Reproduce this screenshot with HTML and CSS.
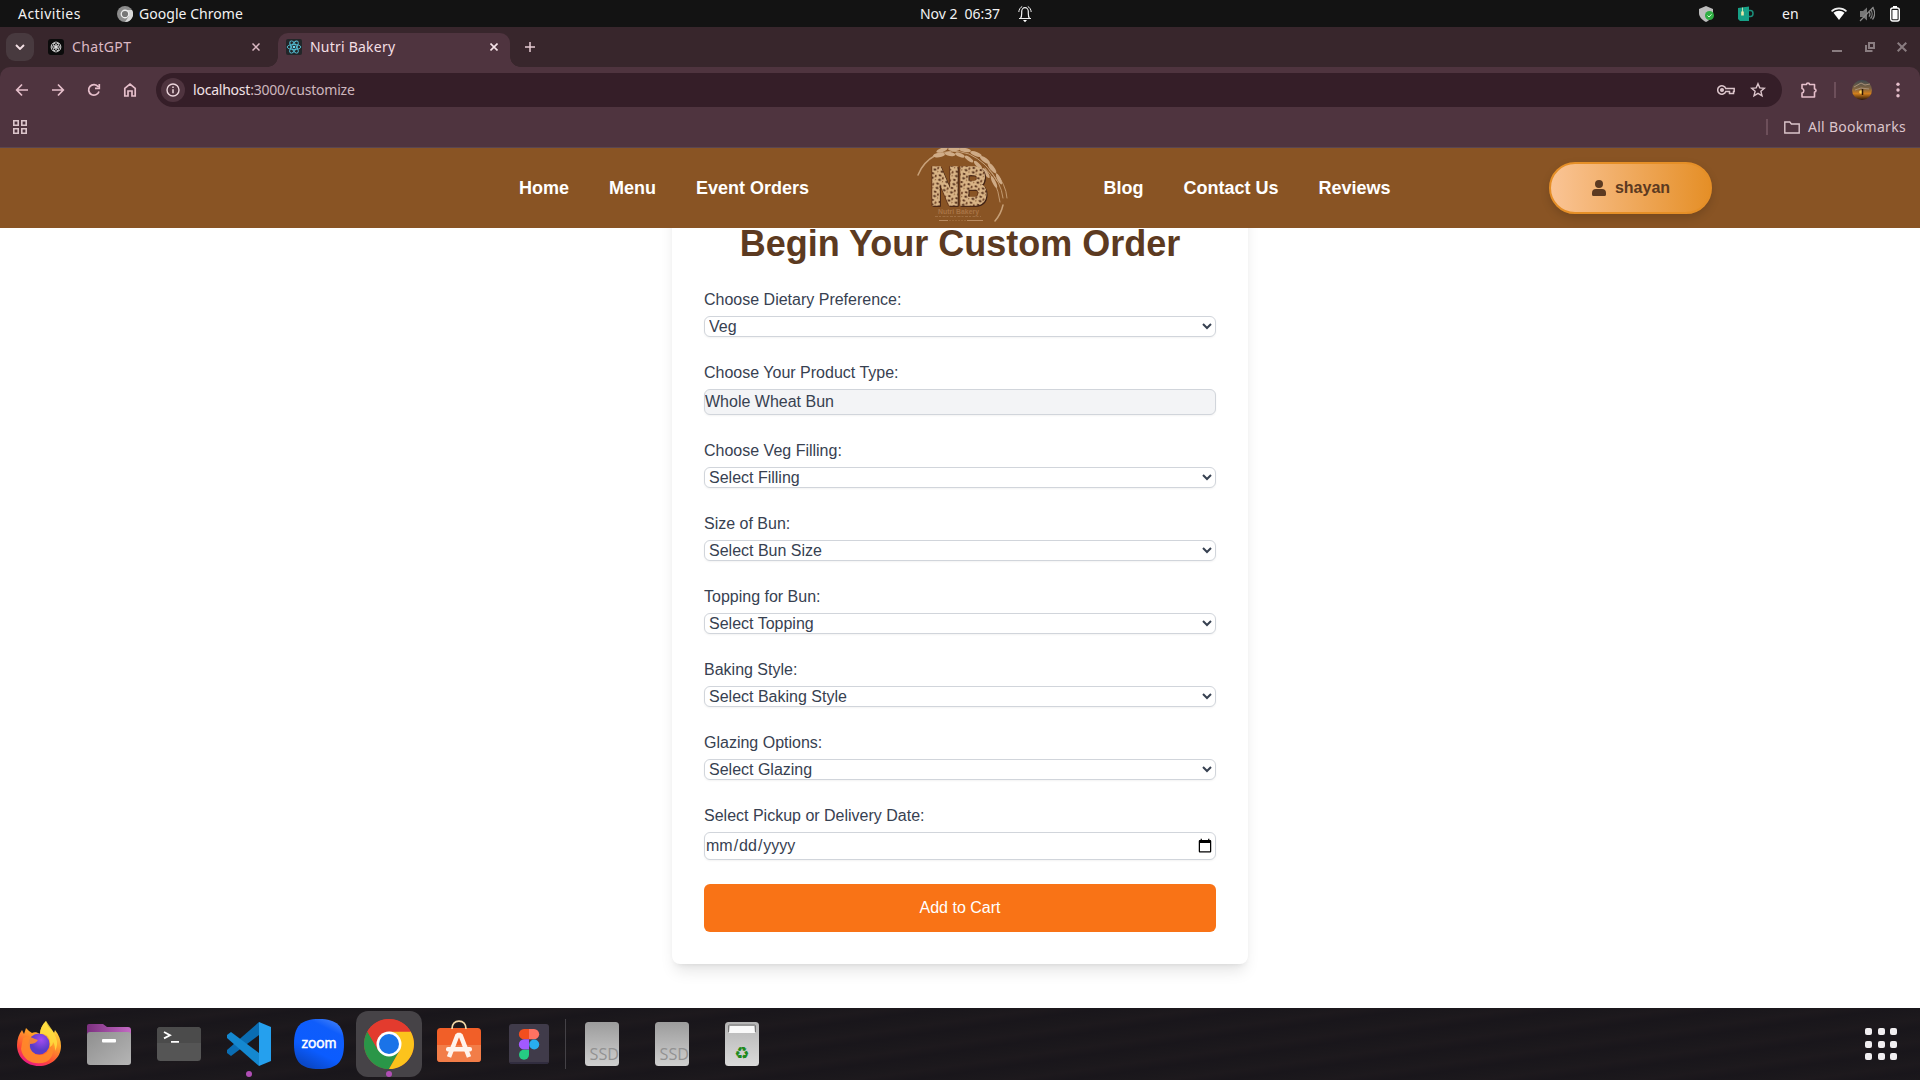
FILE: index.html
```html
<!DOCTYPE html>
<html lang="en">
<head>
<meta charset="utf-8">
<title>Nutri Bakery</title>
<link rel="stylesheet" href="styles.css">
</head>
<body>
<div class="screen">

  <div class="topbar">
    <div class="topbar-left">
      <span class="t-activities">Activities</span>
      <svg class="t-chrome" width="16" height="16" viewBox="0 0 16 16"><circle cx="8" cy="8" r="8" fill="#8c8c8c"/><path d="M8 4h7a8 8 0 0 1-7 12l4-6z" fill="#d8d8d8"/><circle cx="8" cy="8" r="4.400" fill="#eee"/><circle cx="8" cy="8" r="3.100" fill="#777"/></svg>
      <span class="t-app">Google Chrome</span>
    </div>
    <div class="topbar-mid">
      <span class="t-date">Nov 2&nbsp; 06:37</span>
      <svg width="14" height="18" viewBox="0 0 14 18" fill="none" stroke="#f2f2f2"><path d="M1 13.500h12M2.500 13.500C3.500 12 3.700 10.500 3.700 8.500V6.500a3.300 3.800 0 0 1 6.600 0v2c0 2 .2 3.500 1.200 5" stroke-width="1.200"/><path d="M4.200 1.500C2.200 2.500 1 4.500.8 7M9.800 1.500c2 1 3.200 3 3.400 5.500" stroke-width="1"/><path d="M5 15h4l-2 2.200z" fill="#fff" stroke="none"/></svg>
    </div>
    <div class="topbar-right">
      <span class="tray tray-shield"><svg width="16" height="16" viewBox="0 0 16 16"><path d="M7 0l7 3v4c0 4-3 7-7 9-4-2-7-5-7-9V3z" fill="#bdbdbd"/><circle cx="10.500" cy="9.500" r="4.500" fill="#2fae43"/><path d="M8.500 9.500l1.500 1.500 2.500-2.700" stroke="#d8ffd8" fill="none"/></svg></span>
      <span class="tray tray-cup"><svg width="16" height="16" viewBox="0 0 16 16"><path d="M0 2l11-1.500V15H2L0 13z" fill="#17a086"/><path d="M11 4.500h1.500a2.500 3 0 0 1 0 6H11" stroke="#1b8f7b" stroke-width="1.500" fill="none"/><path d="M4.500 1.500V6" stroke="#eee9b5" stroke-width=".8"/><path d="M3.200 5.500h2.600v4H3.200z" fill="#e8e6a8"/></svg></span>
      <span class="t-lang">en</span>
      <span class="tray tray-wifi"><svg width="16" height="14" viewBox="0 0 16 14"><path d="M.5 4.300a11 11 0 0 1 15 0" stroke="#eee" stroke-width="1.600" fill="none"/><path d="M2.500 5.800a8.500 8.500 0 0 1 11 0L8 13z" fill="#fff"/></svg></span>
      <span class="tray tray-mute"><svg width="16" height="16" viewBox="0 0 16 16"><path d="M1 5h3l4-3.500v13L4 11H1z" fill="#777"/><path d="M10 5.500a4 4 0 0 1 0 5M11.500 3.500a7 7 0 0 1 0 9M13.500 1.500a9.500 9.500 0 0 1 0 12M1 15L14.500 1" stroke="#8a8a8a" fill="none" stroke-width="1.200"/></svg></span>
      <span class="tray tray-batt"><svg width="10" height="16" viewBox="0 0 10 16"><rect x=".7" y="2" width="8.600" height="13" rx="2" fill="none" stroke="#fff" stroke-width="1.400"/><path d="M3 0h4v2H3z" fill="#fff"/><path d="M2.400 4h5.200v9.300H2.400z" fill="#fff"/></svg></span>
    </div>
  </div>

  <div class="tabstrip">
    <span class="tab-search"><svg width="10" height="6" viewBox="0 0 10 6"><path d="M1 1l4 4 4-4" fill="none" stroke="#f3dfe4" stroke-width="1.900"/></svg></span>
    <div class="tab">
      <svg width="16" height="16" viewBox="0 0 16 16"><rect width="16" height="16" rx="3" fill="#0b0b0b"/><g fill="none" stroke="#e6e6e6" stroke-width=".8"><ellipse cx="8" cy="5.300" rx="2.600" ry="2.300"/><ellipse cx="8" cy="5.300" rx="2.600" ry="2.300" transform="rotate(60 8 8)"/><ellipse cx="8" cy="5.300" rx="2.600" ry="2.300" transform="rotate(120 8 8)"/><ellipse cx="8" cy="5.300" rx="2.600" ry="2.300" transform="rotate(180 8 8)"/><ellipse cx="8" cy="5.300" rx="2.600" ry="2.300" transform="rotate(240 8 8)"/><ellipse cx="8" cy="5.300" rx="2.600" ry="2.300" transform="rotate(300 8 8)"/></g></svg>
      <span class="tab-title title-chat">ChatGPT</span>
      <svg class="x" width="8" height="8" viewBox="0 0 8 8"><path d="M.5.500l7 7m0-7l-7 7" stroke="#dcb9c4" stroke-width="1.500"/></svg>
    </div>
    <div class="tab tab-active">
      <svg width="16" height="16" viewBox="0 0 16 16"><rect width="16" height="16" rx="2" fill="#222629"/><g fill="none" stroke="#55bfd6" stroke-width=".9"><ellipse cx="8" cy="8" rx="6.800" ry="2.600"/><ellipse cx="8" cy="8" rx="6.800" ry="2.600" transform="rotate(60 8 8)"/><ellipse cx="8" cy="8" rx="6.800" ry="2.600" transform="rotate(120 8 8)"/></g><circle cx="8" cy="8" r="1.300" fill="#6ad8ef"/></svg>
      <span class="tab-title title-nutri">Nutri Bakery</span>
      <svg class="x" width="8" height="8" viewBox="0 0 8 8"><path d="M.5.500l7 7m0-7l-7 7" stroke="#f5e3e8" stroke-width="1.600"/></svg>
    </div>
    <svg class="tab-plus" width="10" height="10" viewBox="0 0 10 10"><path d="M5 0v10M0 5h10" stroke="#e6ccd3" stroke-width="1.500"/></svg>
    <div class="winctl">
      <svg width="10" height="10" viewBox="0 0 10 10"><path d="M0 9h10" stroke="#8a7d81" stroke-width="2"/></svg>
      <svg width="10" height="10" viewBox="0 0 10 10"><path d="M4 1h5v5H4zM1 3v6h6.500" stroke="#8a7d81" stroke-width="2" fill="none"/></svg>
      <svg width="10" height="10" viewBox="0 0 10 10"><path d="M.7.700l8.600 8.600m0-8.600L.7 9.300" stroke="#8a7d81" stroke-width="2"/></svg>
    </div>
  </div>

  <div class="chrome-bars">
    <div class="toolbar">
      <div class="navbtns">
        <svg width="14" height="14" viewBox="0 0 14 14"><path d="M13 7H2M7 1.500L1.700 7 7 12.500"/></svg>
        <svg width="14" height="14" viewBox="0 0 14 14"><path d="M1 7h11M7 1.500L12.300 7 7 12.500"/></svg>
        <svg width="14" height="14" viewBox="0 0 14 14"><path d="M12 8.500A5.300 5.300 0 1 1 11.200 3.700M12.300 1v4.300H8"/></svg>
        <svg width="14" height="14" viewBox="0 0 14 14"><path d="M1.800 13V5.300L7 1.200l5.200 4.100V13H9V8H5v5z"/></svg>
      </div>
      <div class="omnibox">
        <span class="info"><svg width="14" height="14" viewBox="0 0 14 14"><circle cx="7" cy="7" r="6" fill="none" stroke="#ecd6dc" stroke-width="1.400"/><path d="M7 6.200v4M7 3.500V5" stroke="#ecd6dc" stroke-width="1.500"/></svg></span>
        <span class="url"><b>localhost</b>:3000/customize</span>
        <svg class="key" width="18" height="12" viewBox="0 0 18 12" fill="none" stroke="#dcc5cb" stroke-width="1.500"><path d="M8.800 4.500a4.200 4.200 0 1 0 0 3h3.700v2h4v-2h.7v-3z"/><circle cx="5" cy="6" r="1.300" fill="#dcc5cb"/></svg>
        <svg width="16" height="16" viewBox="0 0 16 16" fill="none" stroke="#dcc5cb" stroke-width="1.400"><path d="M8 1.700l1.800 4.200 4.600.4-3.500 3 1.100 4.500L8 11.400l-4 2.400 1.100-4.500-3.500-3 4.600-.4z"/></svg>
      </div>
      <div class="toolend">
        <svg class="puzzle" width="18" height="18" viewBox="0 0 18 18" fill="none" stroke="#e6bfcb" stroke-width="1.600"><path d="M2 3.500h4.500a1.500 1.500 0 0 1 3 0H14.500V8a1.500 1.500 0 0 1 0 3v5H2v-4a2.300 2.300 0 0 0 0-4.500z" stroke-linejoin="round"/></svg>
        <span class="vsep"></span>
        <svg class="avatar" width="20" height="20" viewBox="0 0 20 20"><defs><linearGradient id="sky" x1="0" y1="0" x2="0" y2="1"><stop offset="0" stop-color="#3d4850"/><stop offset=".45" stop-color="#86663f"/><stop offset=".68" stop-color="#d27f1c"/><stop offset="1" stop-color="#2a1608"/></linearGradient></defs><circle cx="10" cy="10" r="10" fill="url(#sky)"/><path d="M2 7l7-4 4 2 5-1M3 10l6-2 8 1" stroke="#a89078" fill="none"/><circle cx="9" cy="12" r="1.800" fill="#ffd45a"/><path d="M10.500 9v6" stroke="#2a1505" stroke-width="1.500"/></svg>
        <svg class="menu" width="4" height="16" viewBox="0 0 4 16" fill="#e6bfcb"><circle cx="2" cy="2.300" r="1.700"/><circle cx="2" cy="8" r="1.700"/><circle cx="2" cy="13.700" r="1.700"/></svg>
      </div>
    </div>
    <div class="bookmarks">
      <svg width="14" height="14" viewBox="0 0 14 14" fill="none" stroke="#dcc5cb" stroke-width="1.600"><path d="M.8.800h4.400v4.400H.8zM8.800.800h4.400v4.400H8.800zM.8 8.800h4.400v4.400H.8zM8.800 8.800h4.400v4.400H8.800z"/></svg>
      <div class="allbm">
        <span class="vsep"></span>
        <svg width="16" height="13" viewBox="0 0 16 13" fill="none" stroke="#dcc5cb" stroke-width="1.400"><path d="M.8 1h5l1.600 2h7.800v9H.8z"/></svg>
        <span class="bm-text">All Bookmarks</span>
      </div>
    </div>
  </div>

  <div class="page">
    <header class="site-header">
      <nav class="nav nav-left"><a>Home</a><a>Menu</a><a>Event Orders</a></nav>
      <svg class="logo" width="96" height="80" viewBox="0 0 96 80">
        <defs>
          <pattern id="crumb" width="7.500" height="8.500" patternUnits="userSpaceOnUse" patternTransform="rotate(17)"><rect width="7.500" height="8.500" fill="#d9b486"/><ellipse cx="2" cy="2" rx="1.500" ry="1.100" fill="#5a331d"/><ellipse cx="5.500" cy="3.800" rx="1" ry="1.500" fill="#6f4327"/><ellipse cx="2.800" cy="6.300" rx="1.500" ry="1" fill="#54301b"/><circle cx="6.200" cy="7.400" r=".7" fill="#8a5b36"/></pattern>
        </defs>
        <g fill="none" stroke="#c7a078" stroke-width="1.500" stroke-linecap="round"><path d="M3 27Q8 14 21 7"/><path d="M21 7Q36 0 54 6Q72 14 82 33" stroke-width="1"/><path d="M88 57Q86 66 80 73"/><path d="M80 24Q91 36 92 50M74 22Q86 34 88 50M70 20Q82 32 85 54" stroke-width=".9"/></g>
        <g fill="#cfab86">
          <ellipse cx="24" cy="7" rx="6" ry="2.300" transform="rotate(-8 24 7)"/><ellipse cx="27" cy="2" rx="6" ry="2" transform="rotate(-20 27 2)"/>
          <ellipse cx="35" cy="6" rx="5.500" ry="2" transform="rotate(8 35 6)"/><ellipse cx="39" cy="1" rx="6" ry="2"/>
          <ellipse cx="45" cy="7" rx="5" ry="1.900" transform="rotate(22 45 7)"/><ellipse cx="50" cy="2" rx="6" ry="2" transform="rotate(10 50 2)"/>
          <ellipse cx="54" cy="11" rx="5" ry="1.900" transform="rotate(36 54 11)"/><ellipse cx="61" cy="6" rx="6" ry="2.200" transform="rotate(20 61 6)"/>
          <ellipse cx="63" cy="17" rx="5.500" ry="1.900" transform="rotate(46 63 17)"/><ellipse cx="70" cy="12" rx="6" ry="2.300" transform="rotate(36 70 12)"/>
          <ellipse cx="71" cy="25" rx="6" ry="1.900" transform="rotate(56 71 25)"/><ellipse cx="77" cy="20" rx="6.500" ry="2.200" transform="rotate(52 77 20)"/>
          <ellipse cx="79" cy="34" rx="6.500" ry="1.700" transform="rotate(64 79 34)"/><ellipse cx="84" cy="31" rx="6" ry="1.800" transform="rotate(64 84 31)"/>
        </g>
        <text class="logo-nb" x="16" y="56" textLength="56" lengthAdjust="spacingAndGlyphs" fill="url(#crumb)" stroke="url(#crumb)" stroke-width="3.500">NB</text>
        <text class="logo-name" x="23" y="65.500" textLength="41" lengthAdjust="spacingAndGlyphs">Nutri Bakery</text>
        <path d="M20 68.500h46" stroke="#9f6e42" stroke-width="1" stroke-dasharray="3 1 2 1.500"/>
        <path d="M24 72.500h9M52 72.500h16" stroke="#b88a60" stroke-width="1"/><path d="M34 72.500h17" stroke="#9b6838" stroke-dasharray="2 1"/>
      </svg>
      <nav class="nav nav-right"><a>Blog</a><a>Contact Us</a><a>Reviews</a></nav>
      <button class="user"><svg width="14" height="16" viewBox="0 0 14 16" fill="#5c3a21"><circle cx="7" cy="4" r="4"/><path d="M0 13a4 4 0 0 1 4-4h6a4 4 0 0 1 4 4v1.500a1.500 1.500 0 0 1-1.500 1.500h-11A1.500 1.500 0 0 1 0 14.500z"/></svg>shayan</button>
    </header>

    <main class="card">
      <h1>Begin Your Custom Order</h1>
      <div class="field"><label>Choose Dietary Preference:</label><select><option>Veg</option></select></div>
      <div class="field"><label>Choose Your Product Type:</label><input class="readonly" type="text" value="Whole Wheat Bun" readonly></div>
      <div class="field"><label>Choose Veg Filling:</label><select><option>Select Filling</option></select></div>
      <div class="field"><label>Size of Bun:</label><select><option>Select Bun Size</option></select></div>
      <div class="field"><label>Topping for Bun:</label><select><option>Select Topping</option></select></div>
      <div class="field"><label>Baking Style:</label><select><option>Select Baking Style</option></select></div>
      <div class="field"><label>Glazing Options:</label><select><option>Select Glazing</option></select></div>
      <div class="field"><label>Select Pickup or Delivery Date:</label><input class="date" type="date"></div>
      <button class="add">Add to Cart</button>
    </main>
  </div>

  <div class="dock">
    <span class="slot"><svg width="44" height="46" viewBox="0 0 44 46"><defs><linearGradient id="fx" x1=".8" y1="0" x2=".3" y2="1"><stop offset="0" stop-color="#fff04a"/><stop offset=".4" stop-color="#ffa02a"/><stop offset=".75" stop-color="#ff4a35"/><stop offset="1" stop-color="#e8158a"/></linearGradient><radialGradient id="fg" cx=".6" cy=".3"><stop offset="0" stop-color="#a44cf0"/><stop offset="1" stop-color="#5a3cc8"/></radialGradient></defs><path d="M22 45C9 45 0 36 0 24 0 18 2 13 5 9l2 4 2-6c2 2 4 4 6 5 2-1 5-1 8 1 0-5 2-9 6-13 1 6 6 8 8 12l1-3c4 5 6 10 6 16 0 12-10 20-22 20z" fill="url(#fx)"/><circle cx="22" cy="23" r="10.500" fill="url(#fg)"/><path d="M6 17c5-3 9 0 15 2-2 3-5 4-8 4-1 6 4 11 10 11 7 0 11-5 10-13 5 6 4 16-4 20-11 4-23-1-25-13z" fill="#ff8a2a" opacity=".9"/><path d="M23 13c7-1 11 4 10 13 2-1 3-3 3-5 2 3 2 6 2 9 5-9 1-16-9-30-4 4-6 8-6 13z" fill="#ffe040" opacity=".8"/></svg></span>
    <span class="slot"><svg width="44" height="41" viewBox="0 0 44 41"><defs><linearGradient id="pu"><stop offset="0" stop-color="#7c3080"/><stop offset="1" stop-color="#c46ac4"/></linearGradient><linearGradient id="gr" x2="1" y2="1" x1="0" y1="0"><stop offset="0" stop-color="#8f8f8f"/><stop offset="1" stop-color="#b5b5b5"/></linearGradient></defs><path d="M0 2a2 2 0 0 1 2-2h14l4 3h21a3 3 0 0 1 3 3v8H0z" fill="url(#pu)"/><rect y="8" width="44" height="33" rx="3" fill="url(#gr)"/><rect x="15" y="15" width="14" height="3.500" rx="1" fill="#fff"/></svg></span>
    <span class="slot"><svg width="44" height="34" viewBox="0 0 44 34"><rect width="44" height="34" rx="3.500" fill="#555"/><path d="M0 16V3.500A3.500 3.500 0 0 1 3.500 0h37A3.500 3.500 0 0 1 44 3.500V16z" fill="#4b4b4b"/><path d="M7 5l6 3.200-6 3.200M14 14.800h8" stroke="#fff" stroke-width="1.800" fill="none"/></svg></span>
    <span class="slot running"><svg width="44" height="44" viewBox="0 0 44 44"><path d="M32 0v13L4 34l-4-3v-3z" fill="#0a6db3"/><path d="M0 16v-3l4-3 28 21v13z" fill="#1488d0"/><path d="M32 0l12 5v34l-12 5z" fill="#25a0ee"/></svg></span>
    <span class="slot"><svg width="50" height="50" viewBox="0 0 50 50"><defs><linearGradient id="zm" x1=".9" y1="0" x2=".4" y2="1"><stop offset="0" stop-color="#4a86f8"/><stop offset=".25" stop-color="#0f5dfb"/><stop offset=".7" stop-color="#0b5cff"/><stop offset="1" stop-color="#0a48c8"/></linearGradient></defs><path d="M25 0C43 0 50 7 50 25S43 50 25 50 0 43 0 25 7 0 25 0z" fill="url(#zm)"/><text class="zoomtxt" x="7.500" y="29" textLength="35" lengthAdjust="spacingAndGlyphs">zoom</text></svg></span>
    <span class="slot running active"><svg width="50" height="50" viewBox="0 0 50 50"><circle cx="25" cy="25" r="25" fill="#e33b2e"/><path d="M3.350 12.500A25 25 0 0 0 25 50l10.800-18.800H14.200z" fill="#2a9648"/><path d="M25 50A25 25 0 0 0 46.650 12.500H25l10.800 18.700z" fill="#fcc31c"/><path d="M3.350 12.500A25 25 0 0 1 46.650 12.500H25L14.200 31.200z" fill="#e33b2e"/><circle cx="25" cy="25" r="12.500" fill="#fff"/><circle cx="25" cy="25" r="10" fill="#1a73e8"/></svg></span>
    <span class="slot"><svg class="up" width="44" height="42" viewBox="0 0 44 42"><rect y="8" width="44" height="34" rx="3.500" fill="#f15f28"/><path d="M0 25h44v13.500a3.500 3.500 0 0 1-3.500 3.500h-37A3.500 3.500 0 0 1 0 38.500z" fill="#f27d48"/><path d="M15 9C15 4 18 1.200 22 1.200S29 4 29 9" stroke="#f3d8a6" stroke-width="1.800" fill="none"/><path d="M12 37L20.500 15h3L32 37" stroke="#fff3ec" stroke-width="4.500" fill="none" stroke-linejoin="bevel"/><rect x="9" y="27" width="26" height="4.500" rx="2" fill="#fff3ec"/></svg></span>
    <span class="slot"><svg width="40" height="40" viewBox="0 0 40 40"><rect width="40" height="40" rx="3" fill="#403b4a"/><path d="M1 39h38" stroke="#2d2a3c" stroke-width="1.500"/><path d="M20 5h-5a5 5 0 0 0 0 10.300h5z" fill="#f24e1e"/><path d="M20 5h5a5 5 0 0 1 0 10.300h-5z" fill="#ff7262"/><path d="M20 15.300h-5a5 5 0 0 0 0 10.300h5z" fill="#a259ff"/><circle cx="25.200" cy="20.500" r="5" fill="#28aef0"/><path d="M20 25.700h-5a5 5 0 1 0 5 5z" fill="#25cc83"/></svg></span>
    <span class="dock-sep"></span>
    <span class="slot"><svg width="34" height="44" viewBox="0 0 34 44"><defs><linearGradient id="sd" x2="0" y2="1"><stop offset="0" stop-color="#9c9c9c"/><stop offset="1" stop-color="#cfcfcf"/></linearGradient></defs><rect width="34" height="44" rx="3.500" fill="url(#sd)"/><text class="ssd" x="4.500" y="38" textLength="29.500" lengthAdjust="spacingAndGlyphs">SSD</text></svg></span>
    <span class="slot"><svg width="34" height="44" viewBox="0 0 34 44"><rect width="34" height="44" rx="3.500" fill="url(#sd)"/><text class="ssd" x="4.500" y="38" textLength="29.500" lengthAdjust="spacingAndGlyphs">SSD</text></svg></span>
    <span class="slot"><svg width="34" height="44" viewBox="0 0 34 44"><defs><linearGradient id="tr" x2="0" y2="1"><stop offset="0" stop-color="#b5b5b5"/><stop offset="1" stop-color="#dadada"/></linearGradient></defs><rect width="34" height="44" rx="3.500" fill="url(#tr)"/><path d="M3.500 10V4a1 1 0 0 1 1-1h25a1 1 0 0 1 1 1v6" fill="none" stroke="#777"/><path d="M5 4h24l1 7H4z" fill="#fafafa"/><text class="recycle" x="17" y="37" text-anchor="middle">♻</text></svg></span>
    <span class="apps"><i></i><i></i><i></i><i></i><i></i><i></i><i></i><i></i><i></i></span>
  </div>
</div>
</body>
</html>
```
FILE: styles.css
```css
* { box-sizing: border-box; }
body { margin: 0; background: #fff; font-family: "Liberation Sans", Arial, sans-serif; overflow: hidden; }
svg { display: block; flex: none; }
.screen { width: 1920px; height: 1080px; display: flex; flex-direction: column; overflow: hidden; background: #38262c; }

/* desktop top bar */
.topbar { height: 27px; flex: none; background: #131313; color: #f2f2f2; font: 14px/27px "Noto Sans", sans-serif; display: grid; grid-template-columns: 920px 1fr 221px; white-space: nowrap; }
.topbar > div { display: flex; align-items: center; }
.topbar-left { padding-left: 18px; }
.t-activities { width: 99px; letter-spacing: .45px; }
.t-app { margin-left: 6px; letter-spacing: .04px; }
.t-date { width: 98px; font-size: 14px; letter-spacing: -.05px; margin-top: -1px; }
.tray { display: flex; justify-content: center; width: 16px; }
.tray-cup { margin-left: 23px; }
.t-lang { margin-left: 28px; width: 16px; }
.tray-wifi { margin-left: 33px; }
.tray-mute { margin-left: 12px; }
.tray-batt { margin-left: 12px; }

/* browser tabs */
.tabstrip { height: 40px; flex: none; background: #38262c; display: flex; align-items: center; padding-left: 6px; font: 14px/20px "Noto Sans", sans-serif; white-space: nowrap; }
.tab-search { width: 28px; height: 28px; border-radius: 9px; background: #483a3f; display: flex; align-items: center; justify-content: center; }
.tab { width: 230px; margin-left: 6px; height: 34px; margin-top: 6px; padding: 0 10px 6px 8px; display: flex; align-items: center; gap: 8px; color: #dcb9c4; }
.tab-active { width: 232px; margin-left: 8px; padding: 0 12px 6px 8px; background: #4f343f; border-radius: 10px 10px 0 0; color: #f3dfe4; position: relative; }
.tab-active::before, .tab-active::after { content: ""; position: absolute; bottom: 0; width: 10px; height: 10px; }
.tab-active::before { left: -10px; background: radial-gradient(circle at 0 0, transparent 9.5px, #4f343f 10px); }
.tab-active::after { right: -10px; background: radial-gradient(circle at 100% 0, transparent 9.5px, #4f343f 10px); }
.title-chat { letter-spacing: .35px; }
.title-nutri { letter-spacing: .22px; }
.x { margin-left: auto; }
.tab-plus { margin-left: 15px; }
.winctl { margin-left: auto; display: flex; gap: 22.5px; padding-right: 13px; }

/* toolbar and bookmarks */
.chrome-bars { height: 81px; flex: none; background: #4f343f; border-bottom: 1px solid #5a4650; border-radius: 10px 10px 0 0; }
.toolbar { height: 46px; display: flex; align-items: center; }
.navbtns { width: 156px; padding-left: 15px; display: flex; gap: 22px; fill: none; stroke: #e6bfcb; stroke-width: 1.7; }
.omnibox { width: 1626px; height: 34px; border-radius: 17px; background: #351e28; display: flex; align-items: center; padding: 0 16px 0 5px; }
.info { width: 24px; height: 24px; border-radius: 50%; background: #4f343f; display: flex; align-items: center; justify-content: center; margin-right: 8px; }
.url { flex: 1; font: 14px/20px "Noto Sans", sans-serif; color: #cdb6bd; letter-spacing: -.22px; }
.url b { font-weight: 400; color: #f3e2e6; }
.key { margin-right: 15px; }
.toolend { flex: 1; display: flex; align-items: center; padding-left: 18px; }
.vsep { width: 2px; height: 16px; background: #6d4f5a; }
.toolend .vsep { margin: 0 16px; }
.menu { margin-left: 24px; }
.bookmarks { height: 28px; display: flex; align-items: center; justify-content: space-between; padding-left: 13px; }
.allbm { display: flex; align-items: center; width: 154px; }
.allbm svg { margin: 0 8px 0 16px; }
.bm-text { font: 14px/20px "Noto Sans", sans-serif; letter-spacing: .28px; color: #dcc5cb; white-space: nowrap; }

/* site */
.page { height: 860px; flex: none; background: #fff; overflow: hidden; }
.site-header { height: 80px; background: #895424; position: relative; z-index: 1; display: flex; align-items: center; }
.nav { display: flex; gap: 40px; font-weight: 700; font-size: 18px; line-height: 28px; color: #fff; white-space: nowrap; }
.nav-left { width: 396px; margin-left: 519px; }
.nav-right { width: 445.5px; margin-left: 92.5px; }
.logo { overflow: hidden; }
.logo-nb { font: 700 52px "Liberation Sans", sans-serif; filter: drop-shadow(1px 1px .5px #3f2114) drop-shadow(-.5px 0 .3px #6b3b1d); }
.logo-name { font: 700 7px "Liberation Sans", sans-serif; fill: #a87345; }
.user { width: 163px; height: 52px; border: 2px solid #e58f27; border-radius: 26px; padding: 0 0 0 1px; background: linear-gradient(90deg, #fac495, #e58f27); box-shadow: 0 4px 10px rgba(0,0,0,.15); display: flex; align-items: center; justify-content: center; gap: 9px; color: #5c3a21; font: 700 16px/24px "Liberation Sans", sans-serif; }
.card { width: 576px; margin: -36px auto 0; padding: 32px; border-radius: 8px; background: #fff; box-shadow: 0 10px 15px -3px rgba(0,0,0,.1), 0 4px 6px -4px rgba(0,0,0,.1); color: #374151; font-size: 16px; line-height: 24px; }
h1 { margin: 0 0 24px; font-size: 36px; line-height: 40px; color: #5c3a21; text-align: center; white-space: nowrap; }
.field { margin-bottom: 24px; }
.field label { display: block; margin-bottom: 4px; }
.field select, .field input { display: block; width: 100%; margin: 0; padding: 0; border: 1px solid #d1d5db; border-radius: 6px; background-color: #fff; color: #374151; font: 16px/24px "Liberation Sans", sans-serif; box-shadow: 0 1px 2px rgba(0,0,0,.05); }
.field select { height: 21px; }
.field input.readonly { height: 26px; background-color: #f3f4f6; }
.field input.date { height: 28px; }
.add { display: block; width: 100%; height: 48px; border: 0; border-radius: 6px; background: #f97316; color: #fff; font: 16px/24px "Liberation Sans", sans-serif; }

/* dock */
.dock { height: 72px; flex: none; padding-left: 4px; display: flex; align-items: center; background: repeating-linear-gradient(172deg, #19161b 0, #1b181c 9px, #1d191d 14px, #19161b 22px); }
.slot { width: 70px; height: 72px; display: flex; align-items: center; justify-content: center; position: relative; }
.slot.active { width: 66px; height: 66px; margin: 0 2px; border-radius: 12px; background: #464347; }
.slot.running::after { content: ""; position: absolute; left: 50%; bottom: 3px; width: 6px; height: 6px; margin-left: -3px; border-radius: 50%; background: #b04eb5; }
.slot.active::after { bottom: 0; }
.up { margin-bottom: 7px; }
.dock-sep { width: 1px; height: 50px; margin: 0 1px; background: #444146; }
.zoomtxt { font: 400 15px Lato, sans-serif; fill: #fff; stroke: #fff; stroke-width: .4; }
.ssd { font: 400 16px "Open Sans", sans-serif; fill: #929292; }
.recycle { font: 17px "DejaVu Sans", sans-serif; fill: #208a1c; }
.apps { margin: 0 23px 0 auto; display: grid; grid-template-columns: repeat(3, 7px); gap: 5.5px; }
.apps i { height: 7px; border-radius: 2px; background: #f0eef0; }
```
